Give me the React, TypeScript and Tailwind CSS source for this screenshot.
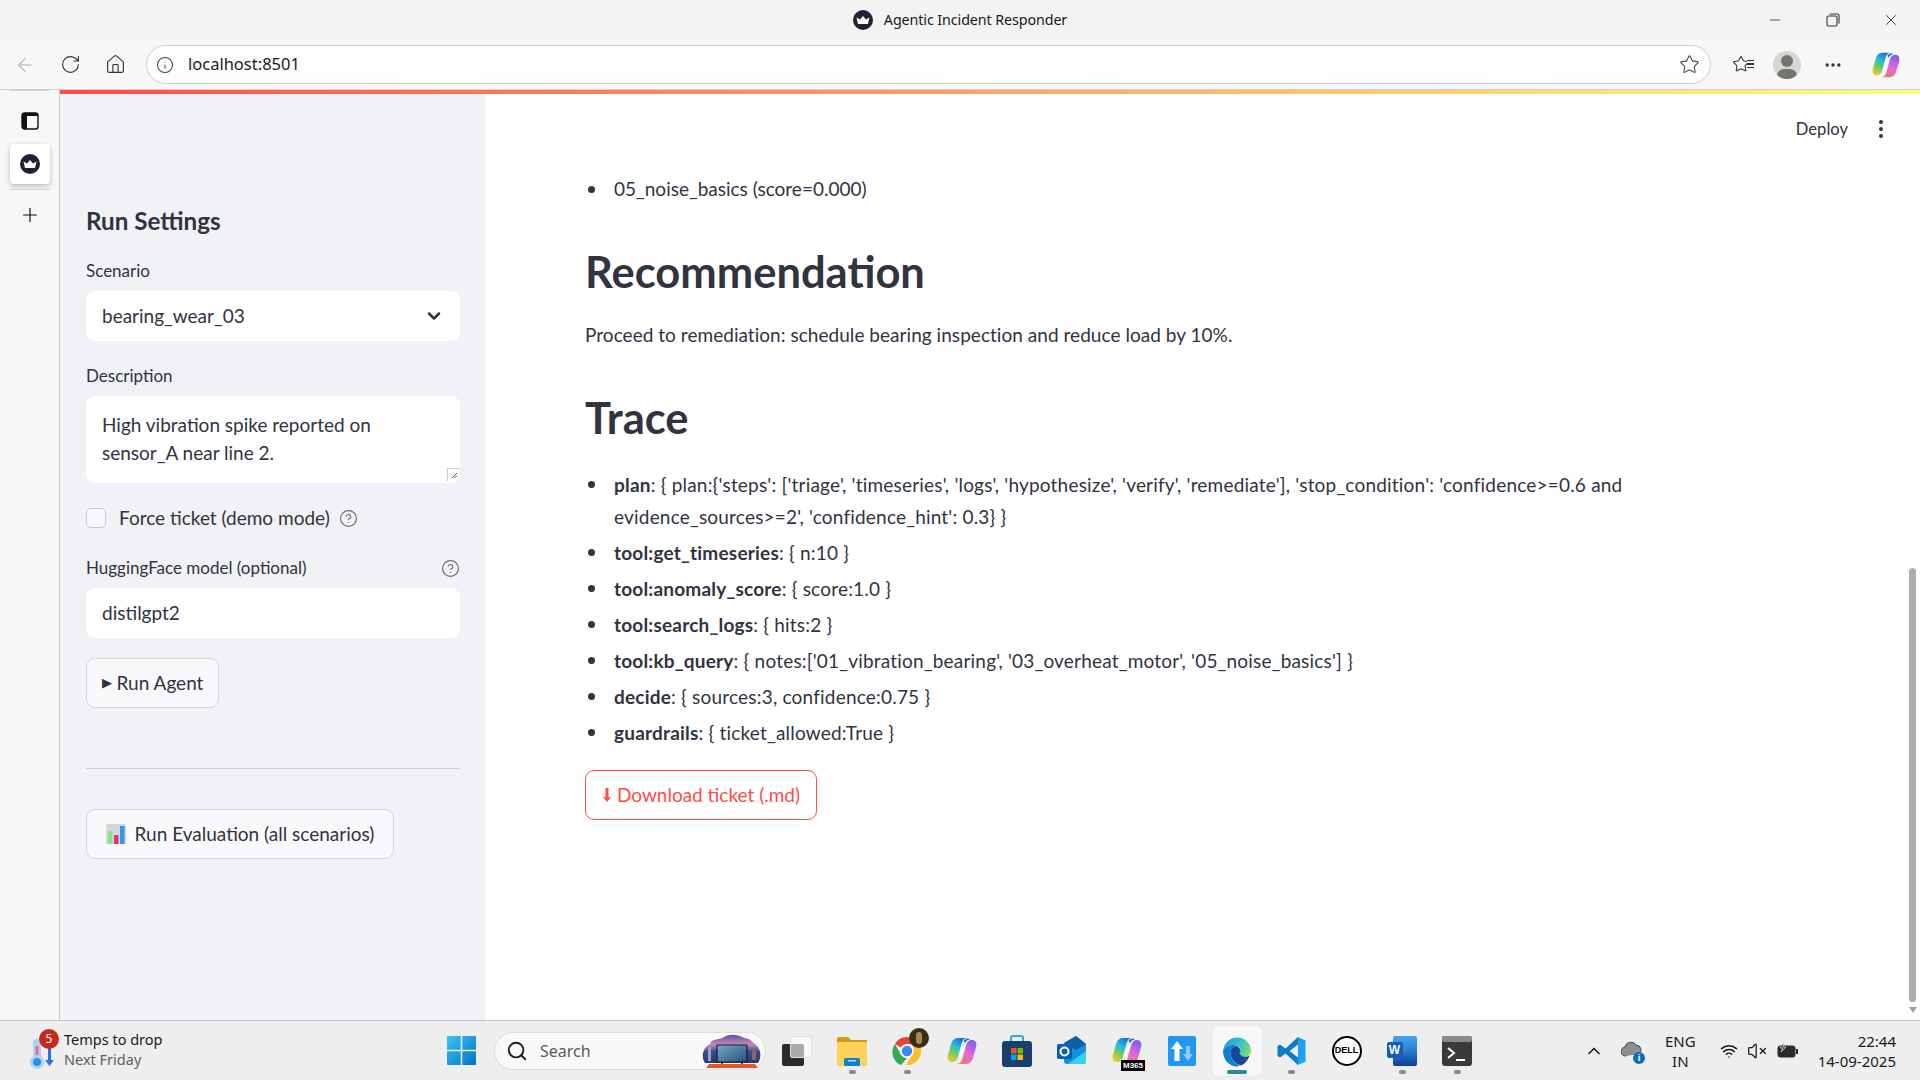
import React from 'react';
import { ArrowLeft, RotateCw, Home, Info, Star, Plus, Search, ChevronUp, ChevronDown, Minus, X, HelpCircle, Ellipsis, Wifi, VolumeX } from 'lucide-react';

const Crown = ({ size = 20 }: { size?: number }) => (
  <svg width={size} height={size} viewBox="0 0 20 20">
    <circle cx="10" cy="10" r="10" fill="#1f2237" />
    <path d="M3.500 7.500 7 9.500 10 6l3 3.500 3.500-2-1.500 6.500H5z" fill="#fff" />
  </svg>
);

const CopilotIcon = ({ size = 30 }: { size?: number }) => (
  <svg width={size} height={size} viewBox="0 0 30 30">
    <defs>
      <linearGradient id="cpa" x1="0.7" y1="0" x2="0.2" y2="1">
        <stop offset="0" stopColor="#1272e0" />
        <stop offset="0.35" stopColor="#22b8d8" />
        <stop offset="0.65" stopColor="#6ccf5a" />
        <stop offset="1" stopColor="#f6c92e" />
      </linearGradient>
      <linearGradient id="cpb" x1="0.7" y1="0" x2="0.2" y2="1">
        <stop offset="0" stopColor="#f4756a" />
        <stop offset="0.45" stopColor="#e06ad8" />
        <stop offset="1" stopColor="#7c5cf0" />
      </linearGradient>
    </defs>
    <path d="M11 2h8.500c-3 .5-4 2.500-5 5.500l-3.500 13c-.9 3-2.500 5.500-6 5.500-3.500 0-5-3-4.200-6.500L3.800 9C4.800 5 7 2 11 2z" fill="url(#cpa)" />
    <path d="M11 2h8.500c-3 .5-4 2.500-5 5.500l-3.500 13c-.9 3-2.500 5.500-6 5.500-3.500 0-5-3-4.200-6.500L3.800 9C4.800 5 7 2 11 2z" fill="url(#cpb)" transform="rotate(180 15 15)" />
    <path d="M16.500 5c1-1.500 2.500-2.500 4.500-2.500l2 1c-2.500.3-4 1.500-5 3.500z" fill="#1272e0" />
    <path d="M17.500 10 12.500 20" stroke="#fff" strokeWidth="2.200" strokeLinecap="round" opacity="0.9" />
  </svg>
);

const ChromeIcon = () => (
  <div className="relative w-[32px] h-[32px]">
    <svg width="32" height="32" viewBox="0 0 32 32">
      <path d="M16 2a14 14 0 0 1 12.100 7H16a7 7 0 0 0-6.100 3.500L3.900 9A14 14 0 0 1 16 2z" fill="#ea4335" />
      <path d="M3.900 9l6 10.500A7 7 0 0 0 16 23l-6 7A14 14 0 0 1 3.900 9z" fill="#34a853" />
      <path d="M28.100 9A14 14 0 0 1 15 30l6-10.500A7 7 0 0 0 22 12.500z" fill="#fbc02d" />
      <circle cx="16" cy="16" r="6" fill="#4285f4" stroke="#fff" strokeWidth="1.500" />
    </svg>
    <div className="absolute top-[-7px] right-[-6px] w-[20px] h-[20px] rounded-full bg-[#3a2f1c] flex items-center justify-center">
      <div className="w-[6px] h-[12px] rounded-full bg-[#a8894f]" />
    </div>
  </div>
);

const EdgeIcon = () => (
  <svg width="32" height="32" viewBox="0 0 32 32">
    <defs>
      <linearGradient id="edg" x1="0" y1="0.3" x2="1" y2="0.7">
        <stop offset="0" stopColor="#1f9fd8" />
        <stop offset="0.5" stopColor="#35c1c8" />
        <stop offset="1" stopColor="#7be06a" />
      </linearGradient>
    </defs>
    <path d="M2 15C3 7 9 1.500 16 1.500 24 1.500 30 7.500 30 15c0 4-3 5.500-6.500 5.500-3 0-5.500-1-5.500-2.500 0-1 1.500-1.500 1.500-4C19.500 11 16 9 12 9c-5 0-8.500 2.500-10 6z" fill="url(#edg)" />
    <path d="M2 15c1.500-3.500 5-6 10-6 1.500 0 3 .3 4 1-4 0-6.500 3-6.500 7 0 5 3.500 10 9 12.500C17.700 30 17 30.500 16 30.500 8 30.500 2 23.500 2 15z" fill="#0d7fd4" />
    <path d="M9.500 17c0-4 2.500-7 6.500-7 2 1 3.500 3 3.500 5 0 1-.5 1.500-1 2 1.500 4 6 5 10 2.500-2 6-6 9.500-9 10C13 27 9.500 22 9.500 17z" fill="#174a9c" />
  </svg>
);

const VsCodeIcon = () => (
  <svg width="32" height="32" viewBox="0 0 32 32">
    <path d="M22 2 9.500 13.500 4 9.500 1.500 11v10L4 22.500l5.500-4L22 30v-7.500L13.500 16 22 9.500z" fill="#0a7cc8" />
    <path d="M22 2l7.500 3.500v21L22 30z" fill="#1ba1ef" />
  </svg>
);

const SearchArt = () => (
  <svg width="60" height="36" viewBox="0 0 60 36" className="absolute right-[3px] top-[-1px]">
    <defs>
      <linearGradient id="sky" x1="0" y1="0" x2="0" y2="1">
        <stop offset="0" stopColor="#5a4fb0" />
        <stop offset="0.35" stopColor="#c98ab0" />
        <stop offset="0.6" stopColor="#3c4a8e" />
        <stop offset="1" stopColor="#2c3a6e" />
      </linearGradient>
      <linearGradient id="tv" x1="0" y1="0" x2="1" y2="1">
        <stop offset="0" stopColor="#6fb0d0" />
        <stop offset="1" stopColor="#2f4a72" />
      </linearGradient>
    </defs>
    <path d="M3 31C-2 24 2 15 8 12 10 6 18 8 22 5 28 1 38 3 42 6c6 0 8 4 11 6 6 4 7 13 3 19z" fill="url(#sky)" />
    <rect x="15" y="13" width="30" height="17" rx="0.500" fill="url(#tv)" stroke="#141c2c" strokeWidth="1.200" />
    <rect x="6" y="15" width="3" height="14" fill="#9aa0c8" />
    <rect x="50" y="18" width="4" height="10" fill="#8a6a68" />
    <path d="M7 32h46l3 4H4z" fill="#e8552a" />
    <path d="M20 30v2M40 30v2" stroke="#141c2c" strokeWidth="1.500" />
  </svg>
);

const TaskIcons = () => (
  <div className="flex items-center">
    {/* task view */}
    <div className="w-[55px] flex justify-center relative">
      <div className="relative w-[30px] h-[30px]">
        <div className="absolute left-0 bottom-0 w-[22px] h-[22px] bg-[#2b2b2b] rounded-[2px]" />
        <div className="absolute right-0 top-0 w-[22px] h-[22px] bg-white/60 border border-[#e2e2e2] rounded-[2px]" />
      </div>
    </div>
    {/* explorer */}
    <div className="w-[55px] flex justify-center">
      <svg width="32" height="30" viewBox="0 0 32 30">
        <path d="M1 3q0-2 2-2h9l3 3h15q1 0 1 1v3H1z" fill="#d69a16" />
        <rect x="1" y="6" width="30" height="24" rx="1.500" fill="#fcd35a" />
        <rect x="8" y="22" width="16" height="8" rx="1.500" fill="#0f7fc9" />
        <rect x="12" y="24" width="8" height="1.500" fill="#fff" opacity="0.7" />
      </svg>
    </div>
    <div className="w-[55px] flex justify-center"><ChromeIcon /></div>
    <div className="w-[55px] flex justify-center"><CopilotIcon /></div>
    {/* store */}
    <div className="w-[55px] flex justify-center">
      <svg width="30" height="32" viewBox="0 0 30 32">
        <path d="M9 7V3q0-2 2-2h8q2 0 2 2v4" fill="none" stroke="#27a8e8" strokeWidth="2" />
        <rect x="0" y="6" width="30" height="26" rx="3" fill="#17406e" />
        <rect x="9" y="13" width="5.500" height="5.500" fill="#f25022" />
        <rect x="15.500" y="13" width="5.500" height="5.500" fill="#7fba00" />
        <rect x="9" y="19.500" width="5.500" height="5.500" fill="#00a4ef" />
        <rect x="15.500" y="19.500" width="5.500" height="5.500" fill="#ffb900" />
      </svg>
    </div>
    {/* outlook */}
    <div className="w-[55px] flex justify-center">
      <svg width="32" height="32" viewBox="0 0 32 32">
        <path d="M8 8l12-7 10 8v17q0 3-3 3H11q-3 0-3-3z" fill="#1490df" />
        <path d="M20 1l10 8-10 6-12-7z" fill="#0f5ea8" />
        <path d="M12 29l18-13v10q0 3-3 3z" fill="#35d0ee" />
        <rect x="1" y="9" width="15" height="15" rx="1.500" fill="#0a5fb4" />
        <circle cx="8.500" cy="16.500" r="4" fill="none" stroke="#fff" strokeWidth="2" />
      </svg>
    </div>
    {/* m365 */}
    <div className="w-[55px] flex justify-center relative">
      <CopilotIcon />
      <span className="absolute right-[9px] bottom-[-5px] bg-black text-white text-[8px] leading-[11px] px-[2px] font-bold font-['Liberation_Sans',sans-serif]">M365</span>
    </div>
    {/* blue arrows app */}
    <div className="w-[55px] flex justify-center">
      <svg width="28" height="30" viewBox="0 0 28 30">
        <rect width="28" height="30" rx="2" fill="#2196f3" />
        <path d="M9 5l6 8h-3.500v12h-5V13H3z" fill="#fff" />
        <path d="M20 25l5-7h-3v-8h-4v8h-3z" fill="#90caf9" />
      </svg>
    </div>
    {/* edge, active */}
    <div className="w-[50px] h-[50px] mx-[2.500px] mt-[1px] rounded-[5px] bg-[#f8f8f8] shadow-[0_0_1px_rgba(0,0,0,0.2)] flex flex-col items-center pt-[10px] relative">
      <EdgeIcon />
      <div className="absolute bottom-[2px] w-[20px] h-[4px] rounded-full bg-[#2a8a9c]" />
    </div>
    <div className="w-[55px] flex justify-center"><VsCodeIcon /></div>
    {/* dell */}
    <div className="w-[55px] flex justify-center">
      <div className="w-[30px] h-[30px] rounded-full border-2 border-black bg-white flex items-center justify-center text-[9px] font-bold text-black font-['Liberation_Sans',sans-serif]">DELL</div>
    </div>
    {/* word */}
    <div className="w-[55px] flex justify-center">
      <div className="relative w-[30px] h-[30px]">
        <div className="absolute right-0 top-0 w-[24px] h-[30px] rounded-[2px] bg-[linear-gradient(180deg,#41a5ee_0%,#2b7cd3_50%,#185abd_75%,#103f91_100%)]" />
        <div className="absolute left-0 top-[6px] w-[16px] h-[16px] rounded-[2px] bg-[#185abd] text-white text-[12px] leading-[16px] text-center font-bold font-['Liberation_Sans',sans-serif]">W</div>
      </div>
    </div>
    {/* terminal */}
    <div className="w-[55px] flex justify-center">
      <svg width="30" height="30" viewBox="0 0 30 30">
        <rect width="30" height="30" rx="3" fill="#3a3a3a" />
        <rect width="30" height="6" rx="2" fill="#8a8a8a" />
        <path d="M6 12l6 5-6 5" fill="none" stroke="#fff" strokeWidth="2" />
        <path d="M14 24h9" stroke="#fff" strokeWidth="2" />
      </svg>
    </div>
  </div>
);

const RUN_DOTS = [853, 908, 1292, 1403, 1458];

const Taskbar = () => (
  <div className="h-[60px] shrink-0 bg-[#eeeeee] border-t border-[#c8c8c8] flex items-center relative font-['Noto_Sans',sans-serif] text-[#1a1a1a]">
    {/* weather */}
    <div className="w-[447px] shrink-0 flex items-center pl-[28px]">
      <div className="relative w-[37px] h-[40px]">
        <svg width="26" height="40" viewBox="0 0 26 40" className="mt-[3px]">
          <rect x="5" y="5" width="8" height="24" rx="4" fill="#a9d4f5" />
          <rect x="7.500" y="12" width="3" height="16" fill="#e86a8a" />
          <circle cx="9" cy="28" r="7" fill="#a9d4f5" />
          <circle cx="9" cy="28" r="4" fill="#2a8fe0" />
          <path d="M20 14v12h-3l4.500 6 4.500-6h-3V14z" fill="#2f6fe0" />
        </svg>
        <div className="absolute left-[11px] top-[-2px] w-[20px] h-[20px] rounded-full bg-[#c42b1c] text-white text-[12px] leading-[20px] text-center">5</div>
      </div>
      <div className="text-[14.500px] leading-[20px] ml-[-1px] -mt-[4px]">
        <div>Temps to drop</div>
        <div className="text-[#5e5e5e]">Next Friday</div>
      </div>
    </div>
    {/* start */}
    <svg width="29" height="29" viewBox="0 0 29 29" className="shrink-0">
      <defs>
        <linearGradient id="win" x1="0" y1="0" x2="1" y2="1">
          <stop offset="0" stopColor="#37c6f4" />
          <stop offset="1" stopColor="#0272c8" />
        </linearGradient>
      </defs>
      <path d="M0 1q0-1 1-1h12.700v13.700H0zM15.300 0H28q1 0 1 1v12.700H15.300zM0 15.300h13.700V29H1q-1 0-1-1zM15.300 15.300H29V28q0 1-1 1H15.300z" fill="url(#win)" />
    </svg>
    {/* search */}
    <div className="ml-[18px] w-[272px] h-[38px] rounded-full bg-[#f9f9f9] border border-[#dcdcdc] flex items-center shrink-0 relative">
      <Search size={22} strokeWidth={2} className="ml-[11px] text-[#1a1a1a]" />
      <span className="ml-[12px] text-[16px] text-[#5a5a5a]">Search</span>
      <SearchArt />
    </div>
    {/* pinned */}
    <div className="ml-[3px]"><TaskIcons /></div>
    {RUN_DOTS.map((x) => (
      <div key={x} className="absolute bottom-[6px] w-[7px] h-[4px] rounded-full bg-[#8a8a8a]" style={{ left: x - 4 }} />
    ))}
    {/* tray */}
    <div className="flex-1 flex items-center justify-end pr-[24px] min-w-0">
      <ChevronUp size={20} strokeWidth={2} className="mr-[17px]" />
      <div className="relative w-[24px] h-[20px] mr-[20px]">
        <svg width="22" height="16" viewBox="0 0 22 16"><path d="M5 15a4.500 4.500 0 0 1-1-9A6 6 0 0 1 15 4a5 5 0 0 1 3 9" fill="#8e8e8e" stroke="#444" /></svg>
        <div className="absolute right-0 bottom-[-3px] w-[12px] h-[12px] rounded-full bg-[#0f6cbd] text-white text-[9px] leading-[12px] text-center font-bold">i</div>
      </div>
      <div className="text-[15px] leading-[20px] text-center mr-[24px]">
        <div>ENG</div>
        <div>IN</div>
      </div>
      <Wifi size={18} strokeWidth={2} className="mr-[9px]" />
      <VolumeX size={20} strokeWidth={1.500} className="mr-[10px]" />
      <svg width="22" height="18" viewBox="0 0 22 18" className="mr-[19px]">
        <rect x="1" y="4" width="17" height="11" rx="2" fill="#2a2a2a" stroke="#2a2a2a" />
        <rect x="19" y="7" width="2" height="5" fill="#2a2a2a" />
        <path d="M7 0 3 6h3L4 10l5-5H6z" fill="#2a2a2a" stroke="#eeeeee" strokeWidth="0.700" />
      </svg>
      <div className="text-[15px] leading-[20px] text-right">
        <div>22:44</div>
        <div>14-09-2025</div>
      </div>
    </div>
  </div>
);

const TitleBar = () => (
  <div className="h-[40px] shrink-0 bg-[#f3f3f3] flex items-center relative font-['Noto_Sans',sans-serif]">
    <div className="flex-1 flex items-center justify-center gap-[11px] text-[14.300px] tracking-[-0.1px] text-[#1a1a1a]">
      <Crown />
      <span>Agentic Incident Responder</span>
    </div>
    <div className="flex items-center text-[#333] absolute right-0 top-0 h-[40px]">
      <div className="w-[58px] flex justify-center"><Minus size={16} strokeWidth={1.200} /></div>
      <div className="w-[58px] flex justify-center">
        <svg width="14" height="14" viewBox="0 0 14 14" fill="none" stroke="#333" strokeWidth="1.100">
          <rect x="1" y="3" width="10" height="10" rx="1.500" />
          <path d="M3.500 1H11q2 0 2 2v7.500" />
        </svg>
      </div>
      <div className="w-[58px] flex justify-center"><X size={18} strokeWidth={1.200} /></div>
    </div>
  </div>
);

const Toolbar = () => (
  <div className="h-[50px] shrink-0 bg-[#f7f7f7] flex items-center border-b border-[#d0d0d0] font-['Noto_Sans',sans-serif]">
    <div className="w-[146px] shrink-0 flex items-center pl-[14px] gap-[24px] text-[#333]">
      <ArrowLeft size={22} strokeWidth={1.200} className="text-[#b4b4b4]" />
      <RotateCw size={21} strokeWidth={1.300} />
      <Home size={21} strokeWidth={1.300} />
    </div>
    <div className="w-[1565px] h-[39px] rounded-full border border-[#cfcfcf] bg-[#fdfdfd] flex items-center pl-[9px] pr-[10px]">
      <Info size={18} strokeWidth={1.400} className="text-[#444] shrink-0" />
      <span className="ml-[14px] text-[16.500px] text-[#1a1a1a] flex-1">localhost:8501</span>
      <Star size={21} strokeWidth={1.200} className="text-[#444]" />
    </div>
    <div className="flex-1 flex items-center pl-[21px] text-[#333]">
      <div className="w-[22px] h-[22px] relative">
        <Star size={18} strokeWidth={1.400} className="absolute left-0 top-[1px]" />
        <div className="absolute right-0 top-[6px] w-[7px] h-[8px] border-y border-[#333] bg-[linear-gradient(#f7f7f7_40%,#333_40%,#333_60%,#f7f7f7_60%)]" />
      </div>
      <div className="ml-[19px] w-[28px] h-[28px] rounded-full bg-[#d6d6d2] overflow-hidden relative shrink-0">
        <div className="absolute left-[8px] top-[4px] w-[12px] h-[12px] rounded-full bg-[#77746f]" />
        <div className="absolute left-[4px] top-[18px] w-[20px] h-[14px] rounded-full bg-[#77746f]" />
      </div>
      <Ellipsis size={20} className="ml-[22px] shrink-0" />
      <div className="ml-[29px] shrink-0"><CopilotIcon size={28} /></div>
    </div>
  </div>
);

const TabStrip = () => (
  <div className="w-[60px] shrink-0 bg-[#f7f7f7] border-r border-[#c8c8c8] flex flex-col items-center">
    <div className="w-[40px] h-[1px] bg-[#d2d2d2] mb-[21px]" />
    <svg width="18" height="18" viewBox="0 0 18 18" fill="none">
      <rect x="1" y="1" width="16" height="16" rx="2.500" stroke="#111" strokeWidth="1.400" />
      <path d="M1 3.500Q1 1 3.500 1H15Q17 1 17 4H6v13H3.500Q1 17 1 14.500z" fill="#111" />
    </svg>
    <div className="w-[40px] h-[40px] mt-[14px] rounded-[4px] bg-white shadow-[0_2px_5px_rgba(0,0,0,0.25)] flex items-center justify-center">
      <Crown />
    </div>
    <div className="w-[40px] h-[1px] bg-[#d2d2d2] mt-[5px]" />
    <Plus size={22} strokeWidth={1.300} className="mt-[14px] text-[#111]" />
  </div>
);

const Label = ({ children }: { children: React.ReactNode }) => (
  <div className="text-[17px] leading-[20px] text-[#31333f]">{children}</div>
);

const Sidebar = () => (
  <div className="w-[425px] shrink-0 bg-[#f0f2f6] pl-[26px] pr-[25px] pt-[109px] text-[#31333f]">
    <h3 className="text-[24.200px] leading-[36px] font-bold">Run Settings</h3>
    <div className="mt-[22px]"><Label>Scenario</Label></div>
    <div className="mt-[10px] h-[50px] rounded-[9px] bg-white flex items-center justify-between pl-[16px] pr-[16px] text-[19px]">
      <span>bearing_wear_03</span>
      <ChevronDown size={20} strokeWidth={3} />
    </div>
    <div className="mt-[25px]"><Label>Description</Label></div>
    <div className="mt-[10px] h-[87px] rounded-[9px] bg-white pl-[16px] pr-[16px] pt-[15px] text-[19px] leading-[28px] relative">
      High vibration spike reported on sensor_A near line 2.
      <div className="absolute right-0 bottom-[2px] w-[13px] h-[13px] border-l border-t border-[#cccccc] flex items-center justify-center">
        <svg width="7" height="7" viewBox="0 0 7 7"><path d="M1 6 6 1M3.500 6 6 3.500" stroke="#555" strokeWidth="1" /></svg>
      </div>
    </div>
    <div className="mt-[25px] flex items-center h-[20px]">
      <div className="w-[20px] h-[20px] rounded-[5px] border border-[#c6c8ce] bg-[#f9f9fb]" />
      <span className="ml-[13px] text-[19px]">Force ticket (demo mode)</span>
      <HelpCircle size={19} strokeWidth={1.500} className="ml-[9px] text-[#6b6d76]" />
    </div>
    <div className="mt-[30px] flex items-center justify-between">
      <Label>HuggingFace model (optional)</Label>
      <HelpCircle size={19} strokeWidth={1.500} className="text-[#6b6d76]" />
    </div>
    <div className="mt-[10px] h-[50px] rounded-[9px] bg-white flex items-center pl-[16px] text-[19px]">distilgpt2</div>
    <button className="mt-[20px] h-[50px] w-[133px] rounded-[9px] border border-[#d5d6da] bg-[#f9f9fb] flex items-center justify-center text-[19px]">
      <span className="text-[13px] mr-[5px]">▶</span>Run Agent
    </button>
    <div className="mt-[60px] h-[1px] bg-[#cfd0d4]" />
    <button className="mt-[40px] h-[50px] w-[308px] rounded-[9px] border border-[#d5d6da] bg-[#f9f9fb] flex items-center justify-center text-[19px]">
      <svg width="20" height="20" viewBox="0 0 20 20" className="mr-[9px]">
        <rect width="20" height="20" rx="1.500" fill="#d4d6dc" />
        <rect x="2" y="7" width="4.500" height="13" fill="#8fe08a" />
        <rect x="8" y="11" width="4.500" height="9" fill="#e8336d" />
        <rect x="14" y="2" width="4.500" height="18" fill="#2b9be8" />
      </svg>
      Run Evaluation (all scenarios)
    </button>
  </div>
);

const TRACE: { key: string; value: string }[] = [
  { key: 'plan', value: " { plan:{'steps': ['triage', 'timeseries', 'logs', 'hypothesize', 'verify', 'remediate'], 'stop_condition': 'confidence>=0.6 and evidence_sources>=2', 'confidence_hint': 0.3} }" },
  { key: 'tool:get_timeseries', value: ' { n:10 }' },
  { key: 'tool:anomaly_score', value: ' { score:1.0 }' },
  { key: 'tool:search_logs', value: ' { hits:2 }' },
  { key: 'tool:kb_query', value: " { notes:['01_vibration_bearing', '03_overheat_motor', '05_noise_basics'] }" },
  { key: 'decide', value: ' { sources:3, confidence:0.75 }' },
  { key: 'guardrails', value: ' { ticket_allowed:True }' },
];

const Bullet = ({ children }: { children: React.ReactNode }) => (
  <li className="flex">
    <span className="w-[29px] shrink-0 pl-[3px] pt-[12px]"><span className="block w-[7px] h-[7px] rounded-full bg-[#31333f]" /></span>
    <div className="flex-1">{children}</div>
  </li>
);

const Main = () => (
  <div className="flex-1 bg-white flex min-w-0 text-[#31333f]">
    <div className="flex-1 min-w-0">
      <div className="h-[50px] mt-[10px] flex items-center justify-end pr-[11px] relative">
        <span className="text-[16.600px] mr-[31px]">Deploy</span>
        <div className="flex flex-col gap-[3px] mr-[15px]">
          <span className="w-[4px] h-[4px] rounded-full bg-[#31333f]" />
          <span className="w-[4px] h-[4px] rounded-full bg-[#31333f]" />
          <span className="w-[4px] h-[4px] rounded-full bg-[#31333f]" />
        </div>
      </div>
      <div className="pl-[100px] pr-[130px] text-[19px] leading-[30px]">
        <ul className="mt-[20px]">
          <Bullet>05_noise_basics (score=0.000)</Bullet>
        </ul>
        <h2 className="mt-[39px] text-[43.500px] leading-[56px] font-bold">Recommendation</h2>
        <p className="mt-[21px] tracking-[0.04px]">Proceed to remediation: schedule bearing inspection and reduce load by 10%.</p>
        <h2 className="mt-[39px] text-[43.500px] leading-[56px] font-bold">Trace</h2>
        <ul className="mt-[24px] flex flex-col gap-[4px] leading-[32px] tracking-[0.2px]">
          {TRACE.map((t) => (
            <Bullet key={t.key}><strong>{t.key}</strong>:{t.value}</Bullet>
          ))}
        </ul>
        <button className="mt-[21px] h-[50px] w-[232px] rounded-[9px] border border-[#ff4b4b] bg-white text-[#ff4b4b] flex items-center justify-center">
          <svg width="10" height="16" viewBox="0 0 10 16" className="mr-[5px]"><path d="M3.500 1h3v9H9l-4 5-4-5h2.500z" fill="#ff4b4b" /></svg>
          Download ticket (.md)
        </button>
      </div>
    </div>
    {/* page scrollbar */}
    <div className="w-[11px] shrink-0 flex flex-col items-start pt-[474px]">
      <div className="w-[7px] h-[434px] rounded-full bg-[#acadb1]" />
      <div className="mt-[5px] w-0 h-0 border-x-[4px] border-x-transparent border-t-[6px] border-t-[#a0a0a0]" />
    </div>
  </div>
);

export default function App() {
  return (
    <div className="w-[1920px] h-[1080px] flex flex-col overflow-hidden bg-white">
      <TitleBar />
      <Toolbar />
      <div className="flex-1 flex min-h-0">
        <TabStrip />
        <div className="flex-1 flex flex-col min-w-0 font-['Lato',sans-serif]">
          <div className="h-[4px] shrink-0 bg-[linear-gradient(90deg,#ff4b4b,#fffd80)]" />
          <div className="flex-1 flex min-h-0">
            <Sidebar />
            <Main />
          </div>
        </div>
      </div>
      <Taskbar />
    </div>
  );
}
